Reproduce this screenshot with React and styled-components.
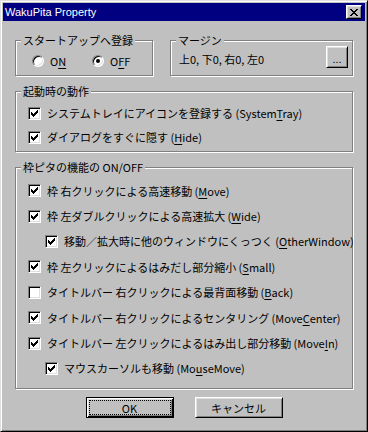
import styled, { createGlobalStyle } from "styled-components";

const GlobalStyle = createGlobalStyle`
  html, body {
    margin: 0;
    padding: 0;
    background: #c0c0c0;
  }
  body {
    font-family: "Noto Sans CJK JP", "Noto Sans", sans-serif;
    font-size: 11px;
    color: #000;
  }
`;

const Window = styled.div`
  box-sizing: border-box;
  width: 368px;
  height: 432px;
  padding: 2px;
  background: #c0c0c0;
  border: 1px solid;
  border-color: #dfdfdf #000 #000 #dfdfdf;
  box-shadow: inset 1px 1px #fff, inset -1px -1px #808080;
  display: flex;
  flex-direction: column;
`;

const TitleBar = styled.div`
  height: 18px;
  flex: none;
  background: #000080;
  display: flex;
  align-items: center;
  justify-content: space-between;
  padding: 0 3px 0 2px;
`;

const Title = styled.span`
  font-family: "Liberation Sans", Arial, sans-serif;
  font-size: 11px;
  color: #fff;
  line-height: 14px;
`;

const Bevel = styled.button`
  box-sizing: border-box;
  padding: 0;
  font: inherit;
  color: #000;
  background: #c0c0c0;
  border: 1px solid;
  border-color: #fff #000 #000 #fff;
  box-shadow: inset 1px 1px #dfdfdf, inset -1px -1px #808080;
  display: flex;
  align-items: center;
  justify-content: center;
`;

const CloseButton = styled(Bevel)`
  width: 16px;
  height: 14px;
`;

const Body = styled.div`
  flex: 1;
  padding: 19px 12px 0 12px;
  display: flex;
  flex-direction: column;
`;

const TopRow = styled.div`
  display: flex;
  gap: 17px;
  height: 36px;
  flex: none;
`;

/* etched group frame; the caption sits over its top edge */
const Group = styled.div`
  position: relative;
  box-sizing: border-box;
  flex: ${(p) => (p.$width ? `0 0 ${p.$width}px` : p.$grow ? "1" : "none")};
  margin-top: ${(p) => p.$top || 0}px;
  padding: ${(p) => p.$pad || 0};
  border: 1px solid #808080;
  box-shadow: inset 1px 1px #fff, 1px 1px #fff;
`;

const Caption = styled.span`
  position: absolute;
  top: -8px;
  left: 5px;
  padding: 0 2px;
  height: 14px;
  line-height: 14px;
  background: #c0c0c0;
  white-space: nowrap;
`;

const RadioRow = styled.div`
  display: flex;
  padding-left: 16px;
`;

const RadioOption = styled.label`
  width: 60px;
  display: flex;
  align-items: center;
  gap: 6px;
  height: 14px;
  line-height: 14px;
`;

const RadioMark = styled.span`
  box-sizing: border-box;
  width: 12px;
  height: 12px;
  border-radius: 50%;
  background: #fff;
  border: 1px solid;
  border-color: #808080 #fff #fff #808080;
  box-shadow: inset 1px 1px #000, inset -1px -1px #dfdfdf;
  display: flex;
  align-items: center;
  justify-content: center;

  &::after {
    content: "";
    width: 4px;
    height: 4px;
    border-radius: 50%;
    background: ${(p) => (p.$on ? "#000" : "transparent")};
  }
`;

const MarginRow = styled.div`
  display: flex;
  align-items: center;
  justify-content: space-between;
  padding: 0 4px 0 8px;
`;

const MarginText = styled.span`
  line-height: 14px;
  padding-top: 4px;
`;

const MoreButton = styled(Bevel)`
  width: 22px;
  height: 22px;
  font-family: "Liberation Sans", Arial, sans-serif;
  padding-top: 4px;
`;

const CheckList = styled.div`
  display: flex;
  flex-direction: column;
`;

const CheckRow = styled.label`
  display: flex;
  align-items: center;
  gap: 6px;
  height: ${(p) => p.$h}px;
  line-height: 14px;
  padding-left: ${(p) => (p.$indent ? 29 : 12)}px;
  white-space: nowrap;
`;

const CheckBox = styled.span`
  box-sizing: border-box;
  width: 13px;
  height: 13px;
  flex: none;
  background: #fff;
  border: 1px solid;
  border-color: #808080 #fff #fff #808080;
  box-shadow: inset 1px 1px #000, inset -1px -1px #dfdfdf;
  display: flex;
  align-items: center;
  justify-content: center;
`;

const Key = styled.span`
  text-decoration: underline;
  text-underline-offset: 2px;
`;

const ButtonRow = styled.div`
  display: flex;
  justify-content: center;
  gap: 21px;
  margin-top: 8px;
`;

const DialogButton = styled(Bevel)`
  position: relative;
  width: 88px;
  height: 21px;
  line-height: 14px;

  &.default {
    border: 1px solid #000;
    box-shadow: inset 1px 1px #fff, inset -1px -1px #000, inset 2px 2px #dfdfdf,
      inset -2px -2px #808080;
  }
  &.default::after {
    content: "";
    position: absolute;
    inset: 2px;
    border: 1px dotted #000;
  }
`;

const CheckMark = () => (
  <svg width="7" height="7" viewBox="0 0 7 7" shapeRendering="crispEdges">
    <path
      d="M0 2h1v3H0z M1 3h1v3H1z M2 4h1v3H2z M3 3h1v3H3z M4 2h1v3H4z M5 1h1v3H5z M6 0h1v3H6z"
      fill="#000"
    />
  </svg>
);

const CloseGlyph = () => (
  <svg width="8" height="7" viewBox="0 0 8 7" shapeRendering="crispEdges">
    <path
      d="M0 0h2v1H0z M6 0h2v1H6z M1 1h2v1H1z M5 1h2v1H5z M2 2h4v1H2z M3 3h2v1H3z M2 4h4v1H2z M1 5h2v1H1z M5 5h2v1H5z M0 6h2v1H0z M6 6h2v1H6z"
      fill="#000"
    />
  </svg>
);

const Check = ({ checked, indent, h, children }) => (
  <CheckRow $indent={indent} $h={h}>
    <CheckBox>{checked && <CheckMark />}</CheckBox>
    <span>{children}</span>
  </CheckRow>
);

const features = [
  { text: "枠 右クリックによる高速移動 (", pre: "", key: "M", post: "ove)", checked: true },
  { text: "枠 左ダブルクリックによる高速拡大 (", pre: "", key: "W", post: "ide)", checked: true },
  {
    text: "移動／拡大時に他のウィンドウにくっつく (",
    pre: "",
    key: "O",
    post: "therWindow)",
    checked: true,
    indent: true,
  },
  { text: "枠 左クリックによるはみだし部分縮小 (", pre: "", key: "S", post: "mall)", checked: true },
  { text: "タイトルバー 右クリックによる最背面移動 (", pre: "", key: "B", post: "ack)", checked: false },
  { text: "タイトルバー 右クリックによるセンタリング (", pre: "Move", key: "C", post: "enter)", checked: true },
  { text: "タイトルバー 左クリックによるはみ出し部分移動 (", pre: "Move", key: "I", post: "n)", checked: true },
  { text: "マウスカーソルも移動 (", pre: "Mo", key: "u", post: "seMove)", checked: true, indent: true },
];

export default function App() {
  return (
    <>
      <GlobalStyle />
      <Window>
        <TitleBar>
          <Title>WakuPita Property</Title>
          <CloseButton type="button">
            <CloseGlyph />
          </CloseButton>
        </TitleBar>
        <Body>
          <TopRow>
            <Group $width={133} $pad="13px 0 0 0">
              <Caption>スタートアップへ登録</Caption>
              <RadioRow>
                <RadioOption>
                  <RadioMark />
                  <span>
                    O<Key>N</Key>
                  </span>
                </RadioOption>
                <RadioOption>
                  <RadioMark $on />
                  <span>
                    O<Key>F</Key>F
                  </span>
                </RadioOption>
              </RadioRow>
            </Group>
            <Group $grow $pad="5px 0 0 0">
              <Caption>マージン</Caption>
              <MarginRow>
                <MarginText>上0, 下0, 右0, 左0</MarginText>
                <MoreButton type="button">...</MoreButton>
              </MarginRow>
            </Group>
          </TopRow>

          <Group $top={15} $pad="9px 0 2px 0">
            <Caption>起動時の動作</Caption>
            <CheckList>
              <Check checked h={24}>
                システムトレイにアイコンを登録する (System<Key>T</Key>ray)
              </Check>
              <Check checked h={24}>
                ダイアログをすぐに隠す (<Key>H</Key>ide)
              </Check>
            </CheckList>
          </Group>

          <Group $top={15} $pad="10px 0 7px 0">
            <Caption>枠ピタの機能の ON/OFF</Caption>
            <CheckList>
              {features.map((f) => (
                <Check key={f.text} checked={f.checked} indent={f.indent} h={25.4}>
                  {f.text}
                  {f.pre}
                  <Key>{f.key}</Key>
                  {f.post}
                </Check>
              ))}
            </CheckList>
          </Group>

          <ButtonRow>
            <DialogButton type="button" className="default">
              OK
            </DialogButton>
            <DialogButton type="button">キャンセル</DialogButton>
          </ButtonRow>
        </Body>
      </Window>
    </>
  );
}
